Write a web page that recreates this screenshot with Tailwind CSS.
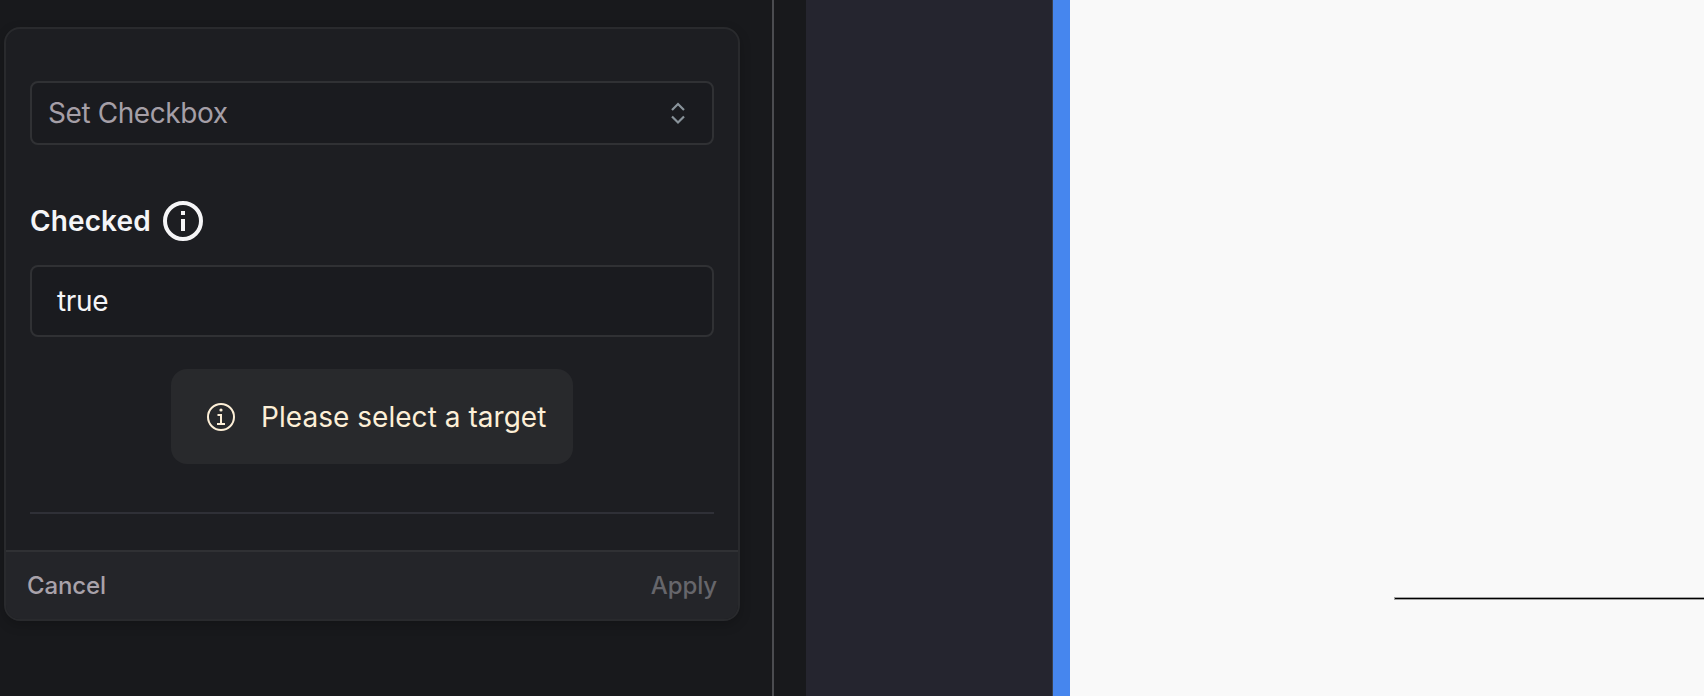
<!DOCTYPE html>
<html lang="en">
<head>
<meta charset="utf-8">
<title>Set Checkbox</title>
<script src="https://cdn.jsdelivr.net/npm/@tailwindcss/browser@4"></script>
</head>
<body class="h-[696px] w-[1704px] overflow-hidden bg-[#18191c] font-['Inter',sans-serif]">
<div class="flex h-full">
  <aside class="h-full w-[774px] shrink-0 border-r-2 border-[#4b4c50] pt-[27px] pl-1">
    <section class="flex h-[594px] w-[736px] flex-col overflow-hidden rounded-2xl border-2 border-[#292a2d] bg-[#1d1e22] shadow-[0_4px_12px_rgba(0,0,0,0.2)]">
      <div class="flex h-[521px] shrink-0 flex-col px-6 pt-[52px]">
        <button class="flex h-16 items-center justify-between rounded-lg border-2 border-[#303134] bg-[#1a1b1f] pr-[26px] pl-4 text-[28px] leading-8 text-[#a59fa7]">
          <span class="tracking-[-0.42px]">Set Checkbox</span>
          <svg class="h-6 w-[16px]" viewBox="0 0 16 24" fill="none" stroke="#89939a" stroke-width="2.2"><path d="M2 9 8 3 14 9M2 15.5 8 21.5 14 15.5"/></svg>
        </button>
        <div class="mt-14 flex h-10 items-center gap-3 text-[#f5f5f7]">
          <span class="text-[28px] leading-8 font-semibold tracking-[0.12px]">Checked</span>
          <svg class="size-10" viewBox="0 0 40 40" fill="none"><circle cx="20" cy="20" r="18" stroke="currentColor" stroke-width="4"/><path d="M18 10h4v4h-4zM18 18h4v12h-4z" fill="currentColor"/></svg>
        </div>
        <div class="mt-6 flex h-[72px] items-center rounded-lg border-2 border-[#303134] bg-[#1a1b1f] pl-[25px] text-[28px] leading-8 tracking-[-0.3px] text-[#f5f5f7]">true</div>
        <div class="mt-8 flex h-[95px] w-[402px] items-center self-center rounded-2xl bg-[#28292c] pl-9 text-[28px] leading-8 text-[#fdefd7]">
          <svg class="size-7 shrink-0" viewBox="0 0 28 28" fill="none" stroke="currentColor" stroke-width="2"><circle cx="14" cy="14" r="13"/><path d="M10.5 12H14v9M10 21h8"/><circle cx="14" cy="7" r="1.6" fill="currentColor" stroke="none"/></svg>
          <span class="ml-[26px] whitespace-nowrap tracking-[0.04px]">Please select a target</span>
        </div>
        <hr class="mt-12 border-t-2 border-[#2f3037]">
      </div>
      <footer class="flex flex-1 items-center justify-between border-t-2 border-[#303134] bg-[#242529] px-[21px] text-[24px] leading-8 font-medium tracking-[-0.1px]">
        <span class="text-[#a8a2aa]">Cancel</span>
        <span class="text-[#66666b]">Apply</span>
      </footer>
    </section>
  </aside>
  <div class="w-8 shrink-0"></div>
  <div class="w-[247px] shrink-0 border-r border-[#3b414f] bg-[#25252f]"></div>
  <div class="w-[17px] shrink-0 bg-[#4686ee]"></div>
  <main class="flex-1 bg-[#f9f9f9] pt-[597px] pl-[324px]">
    <div class="h-[3px] border-y border-l border-[#a3a3a3] bg-black"></div>
  </main>
</div>
</body>
</html>
